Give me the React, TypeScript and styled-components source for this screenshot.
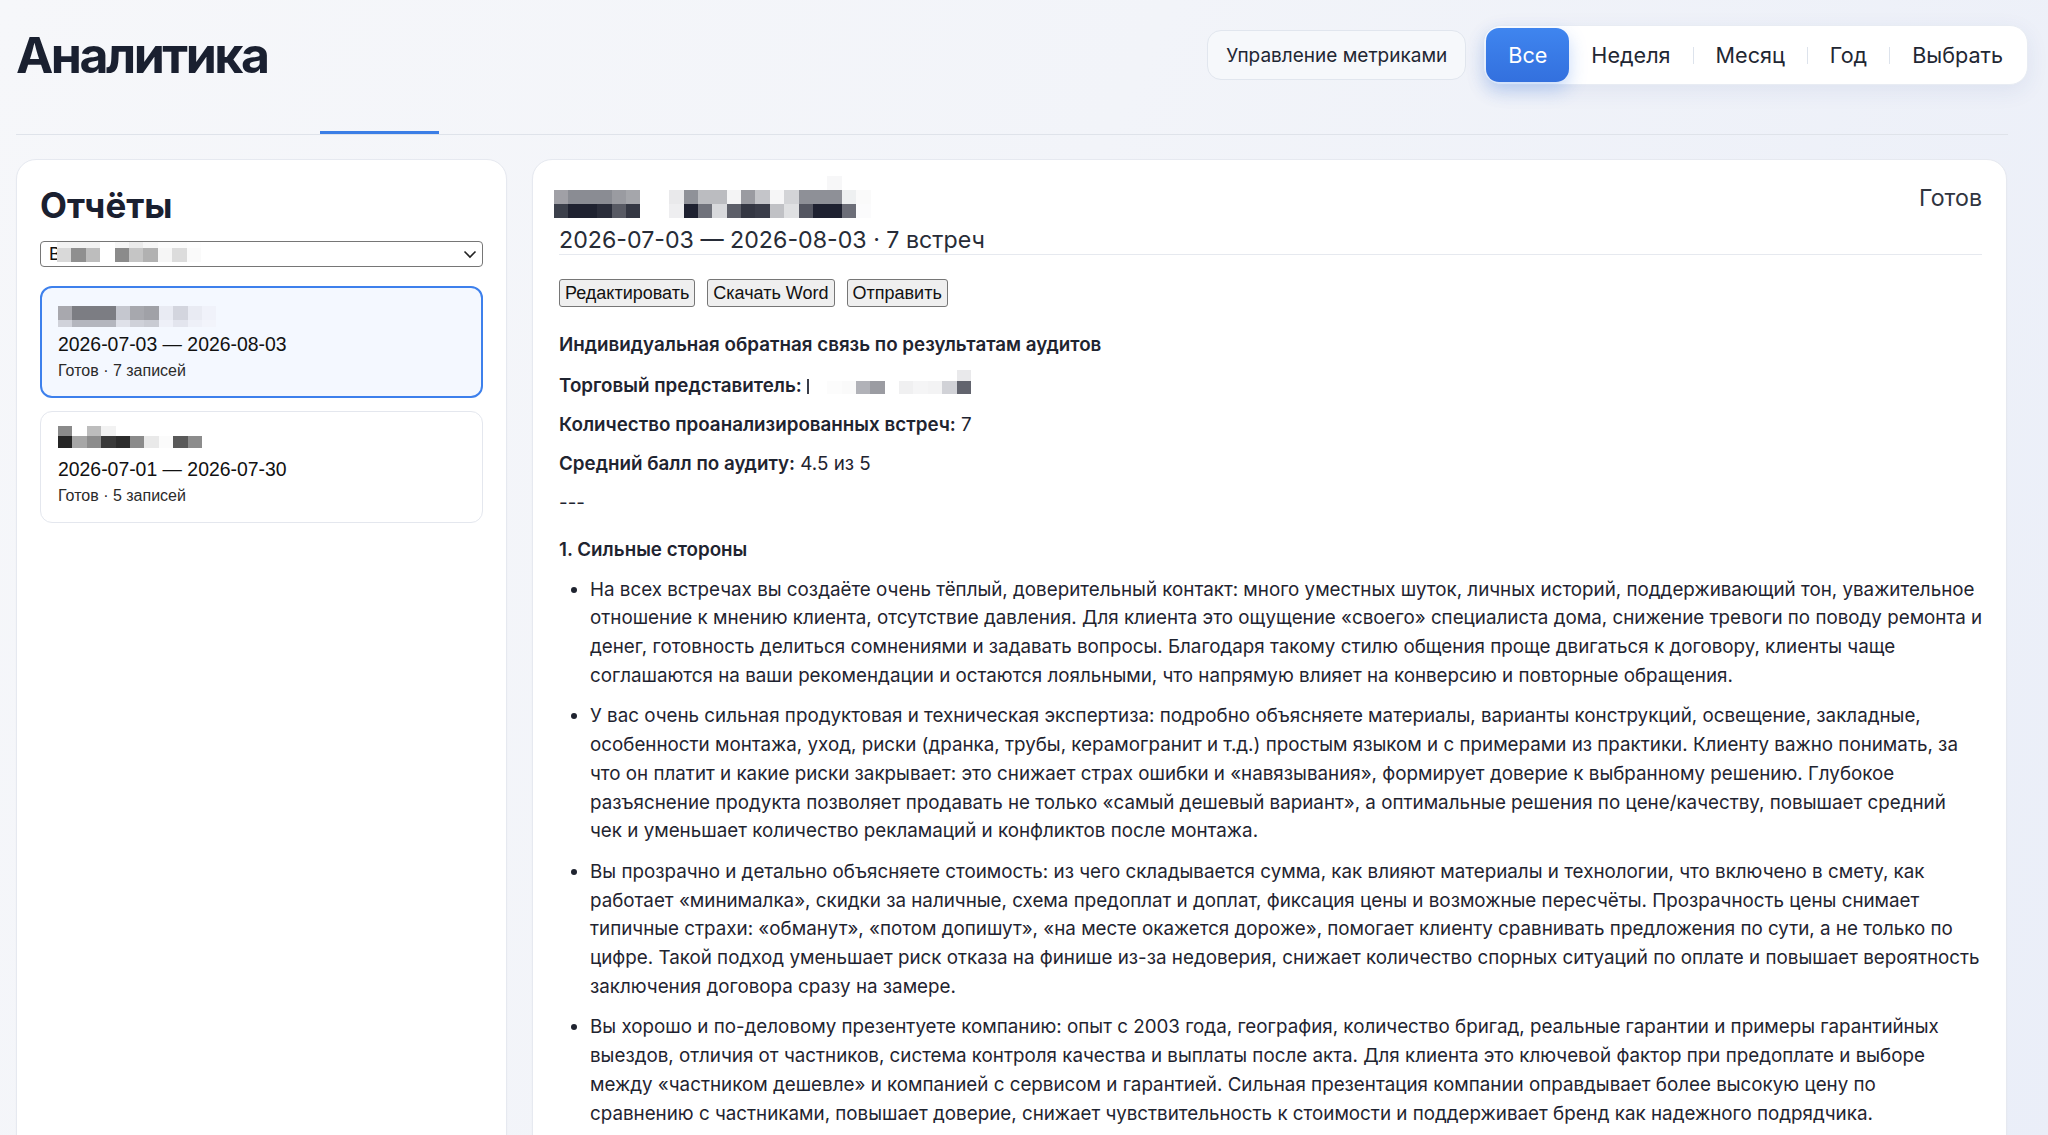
import React from 'react'
import styled, { createGlobalStyle } from 'styled-components'

const GlobalStyle = createGlobalStyle`
    html, body {
        margin: 0;
        padding: 0;
    }

    body {
        font-family: Inter, "Noto Sans", sans-serif;
        color: #1f2430;
        background: linear-gradient(115deg, #f6f7fa 0%, #f2f4f9 45%, #eaeef8 100%);
        min-height: 100vh;
    }
`

const Page = styled.div`
    padding: 24px 0 0 16px;
`

const Header = styled.header`
    display: flex;
    align-items: center;
    justify-content: space-between;
    padding-right: 20px;
`

const Title = styled.h1`
    margin: 0;
    font-size: 50px;
    line-height: 62px;
    font-weight: 700;
    letter-spacing: -2.5px;
    color: #1a2030;
`

const Controls = styled.div`
    display: flex;
    align-items: center;
    gap: 17px;
`

const GhostButton = styled.button`
    height: 50px;
    padding: 0 18px;
    border: 1px solid #e1e6ee;
    border-radius: 14px;
    background: #f6f8fb;
    font-family: Inter, sans-serif;
    font-size: 19px;
    color: #1f2733;
`

const Segmented = styled.div`
    display: flex;
    align-items: center;
    padding: 2px;
    border: 1px solid #e8ecf3;
    border-radius: 18px;
    background: #fff;
    box-shadow: 0 6px 22px rgba(40, 70, 140, 0.08);
`

const Segment = styled.button<{ $active?: boolean }>`
    height: 54px;
    padding: 0 22px;
    border: 0;
    border-radius: 13px;
    font-family: Inter, sans-serif;
    font-size: 21.6px;
    color: ${p => (p.$active ? '#fff' : '#1f2733')};
    background: ${p => (p.$active ? 'linear-gradient(180deg, #3f85ef 0%, #3370de 100%)' : 'transparent')};
    box-shadow: ${p => (p.$active ? '0 8px 18px rgba(52, 118, 230, 0.28)' : 'none')};
`

const SegmentDivider = styled.span`
    width: 1px;
    height: 17px;
    background: #dde3ec;
`

const TabBar = styled.nav`
    display: flex;
    margin-right: 40px;
    border-bottom: 1px solid #dfe3ea;
`

const Tab = styled.div<{ $width: number; $active?: boolean }>`
    position: relative;
    width: ${p => p.$width}px;
    height: 48px;

    &::after {
        content: "";
        display: ${p => (p.$active ? 'block' : 'none')};
        position: absolute;
        left: 0;
        right: 0;
        bottom: 0;
        height: 3px;
        background: #3b7ee6;
    }
`

const Layout = styled.main`
    display: grid;
    grid-template-columns: 491px 1fr;
    gap: 25px;
    margin-top: 24px;
    padding-right: 41px;
    align-items: stretch;
`

const Panel = styled.section`
    background: #fff;
    border: 1px solid #e6e9f0;
    border-radius: 20px;
    box-shadow: 0 1px 2px rgba(20, 30, 60, 0.03);
`

const Sidebar = styled(Panel)`
    padding: 24px 23px;
`

const SidebarTitle = styled.h2`
    margin: 0;
    font-size: 35px;
    line-height: 42px;
    font-weight: 700;
    color: #1a2030;
`

const SelectBox = styled.div`
    display: flex;
    align-items: center;
    height: 24px;
    margin-top: 15px;
    padding: 0 5px 0 8px;
    border: 1px solid #767676;
    border-radius: 4px;
    font-family: "Liberation Sans", Arial, sans-serif;
    font-size: 18px;
    line-height: 24px;
    color: #111;
`

const SelectText = styled.span`
    flex: none;
`

const Chevron = styled.svg`
    margin-left: auto;
    width: 14px;
    height: 9px;
`

const ReportList = styled.div`
    display: flex;
    flex-direction: column;
    gap: 13px;
    margin-top: 19px;
`

const ReportCard = styled.div<{ $active?: boolean }>`
    border: ${p => (p.$active ? '2px solid #3d80ec' : '1px solid #e4e7ee')};
    padding: ${p => (p.$active ? '13px 16px 15px' : '14px 17px 16px')};
    border-radius: 12px;
    background: ${p => (p.$active ? '#f4f8ff' : '#fff')};
    font-family: "Liberation Sans", Arial, sans-serif;
`

const CardDates = styled.div`
    margin-top: 4px;
    font-size: 19.4px;
    line-height: 24px;
    color: #111;
`

const CardMeta = styled.div`
    margin-top: 5px;
    font-size: 16px;
    line-height: 20px;
    color: #2a2a2a;
`

const MosaicBox = styled.div<{ $inline?: boolean; $shift?: number }>`
    display: ${p => (p.$inline ? 'inline-block' : 'block')};
    flex: none;
    overflow: hidden;
    vertical-align: ${p => (p.$inline ? '-2px' : 'baseline')};
    margin-left: ${p => p.$shift ?? 0}px;
`

const MosaicRow = styled.div<{ $h: number }>`
    display: flex;
    height: ${p => p.$h}px;
`

const MosaicCell = styled.div<{ $w: number; $c: string }>`
    flex: none;
    width: ${p => p.$w}px;
    background: ${p => p.$c || 'transparent'};
`

const Report = styled(Panel)`
    padding: 16px 22.5px 40px 26px;
    min-width: 0;
`

const ReportHead = styled.div`
    display: flex;
    justify-content: space-between;
    align-items: flex-start;
    margin-right: 1.5px;
    border-bottom: 1px solid #e6e9ef;
`

const ReportPeriod = styled.div`
    margin-top: 8px;
    font-size: 23.2px;
    line-height: 28px;
    color: #272c37;
`

const Status = styled.div`
    margin-top: 8px;
    font-size: 23.2px;
    line-height: 28px;
    color: #30353f;
`

const Actions = styled.div`
    display: flex;
    gap: 12px;
    margin-top: 24px;
`

const NativeButton = styled.button`
    height: 28px;
    padding: 0 5px;
    border: 1px solid #767676;
    border-radius: 3px;
    background: #efefef;
    font-family: "Liberation Sans", Arial, sans-serif;
    font-size: 18px;
    color: #111;
`

const Content = styled.article`
    margin-top: 24px;
    font-size: 18.8px;
    line-height: 28.8px;
    color: #1f2430;

    p {
        margin: 0 0 10.2px;
    }

    strong {
        font-weight: 600;
    }

    h3 {
        margin: 18px 0 0;
        font-size: 18.8px;
        line-height: 28.8px;
        font-weight: 600;
    }

    ul {
        margin: 11px 0 0;
        padding-left: 31px;
    }

    li {
        margin-bottom: 11.5px;
    }
`

// a cell is either a colour (standard width) or a colour with its own width
type Cell = string | { c: string; w: number }
type Row = { h: number; c: Cell[] }

function Mosaic({ rows, cell = 14.4, inline, shift }: { rows: Row[]; cell?: number; inline?: boolean; shift?: number }) {
    return (
        <MosaicBox $inline={inline} $shift={shift}>
            {rows.map((row, i) => (
                <MosaicRow key={i} $h={row.h}>
                    {row.c.map((c, j) =>
                        typeof c === 'string'
                            ? <MosaicCell key={j} $w={cell} $c={c} />
                            : <MosaicCell key={j} $w={c.w} $c={c.c} />
                    )}
                </MosaicRow>
            ))}
        </MosaicBox>
    )
}

const selectName: Row[] = [
    { h: 6, c: ['#f3f3f3', '#f3f3f3', '#f3f3f3', '', '#f6f6f6', '#ebebeb', '#f6f6f6', '#fbfbfb', '#fbfbfb', '#fdfdfd'] },
    { h: 14, c: ['#d9d9d9', '#8f8f8f', '#bdbdbd', '', '#8b8b8b', '#c5c5c5', '#b1b1b1', '#f6f6f6', '#dcdcdc', '#fafafa'] },
    { h: 4, c: [] },
]

const firstCardName: Row[] = [
    { h: 5, c: [] },
    { h: 14, c: ['#a8a8ae', '#7c7d83', '#7c7d83', '#7c7d83', '#c5c7cf', '#a7a8ae', '#a0a1a7', '#e9ebf3', '#d3d5de', '#e9ebf3', '#f0f2fa'] },
    { h: 7, c: ['#d0d2da', '#b4b6be', '#b4b6be', '#b4b6be', '#dfe1e9', '#cfd1d9', '#c9cbd3', '#eef0f8', '#e3e5ee', '#eef0f8', '#f2f4fb'] },
    { h: 1, c: [] },
]

const secondCardName: Row[] = [
    { h: 10, c: ['#8a8a8a', '', '#bdbdbd', '#f2f2f2'] },
    { h: 12, c: ['#252525', '#a6a6a6', '#8c8c8c', '#393939', '#2c2c2c', '#8a8a8a', '#e9e9e9', '#fbfbfb', '#595959', '#8c8c8c'] },
    { h: 5, c: [] },
]

const reportName: Row[] = [
    { h: 14, c: ['', '', '', '', '', '', '', '', '', '', '', '', '', '', '', '', '', '', '', '#f7f7f8', ''] },
    {
        h: 14,
        c: ['#a0a0a6', '#8a8c93', '#8a8c93', '#8a8c93', '#9a9ba1', '#a5a6ab', '', '',
            '#e9e9eb', '#8f9198', '#bbbcc0', '#bbbcc0', '#f4f4f5', '#9a9ba1', '#c4c5c9', '#f6f6f7', '#d3d4d7', '#8e9097', '#8e9097', '#8e9097', '#eef0f1', '#fafafa'],
    },
    {
        h: 14,
        c: ['#3c404b', '#1f2230', '#1f2230', '#2a2d3a', '#585a64', '#343743', '', '',
            '#eeeef0', '#1e2130', '#70727b', '#d8d9dc', '#5d5f69', '#343743', '#3a3d49', '#c0c1c5', '#dfe0e2', '#545661', '#1e2130', '#1e2130', '#6c6e78', '#fbfbfc'],
    },
]

// the leading 2px stroke is the first letter peeking out from under the blur
const repName: Row[] = [
    { h: 9, c: [{ c: '', w: 20 }, '', '', '', '', '', '', '', '', '', '#e9e9eb'] },
    { h: 2, c: [{ c: '#3a3d48', w: 2 }, { c: '', w: 18 }, '', '', '', '', '', '', '', '', '', '#e9e9eb'] },
    { h: 13, c: [{ c: '#3a3d48', w: 2 }, { c: '', w: 18 }, '#fcfcfc', '#fafafa', '#b1b2b8', '#9b9ca2', '', '#f0f0f1', '#f5f5f6', '#f3f3f4', '#d1d2d7', '#62646e'] },
]

const strengths = [
    'На всех встречах вы создаёте очень тёплый, доверительный контакт: много уместных шуток, личных историй, поддерживающий тон, уважительное отношение к мнению клиента, отсутствие давления. Для клиента это ощущение «своего» специалиста дома, снижение тревоги по поводу ремонта и денег, готовность делиться сомнениями и задавать вопросы. Благодаря такому стилю общения проще двигаться к договору, клиенты чаще соглашаются на ваши рекомендации и остаются лояльными, что напрямую влияет на конверсию и повторные обращения.',
    'У вас очень сильная продуктовая и техническая экспертиза: подробно объясняете материалы, варианты конструкций, освещение, закладные, особенности монтажа, уход, риски (дранка, трубы, керамогранит и т.д.) простым языком и с примерами из практики. Клиенту важно понимать, за что он платит и какие риски закрывает: это снижает страх ошибки и «навязывания», формирует доверие к выбранному решению. Глубокое разъяснение продукта позволяет продавать не только «самый дешевый вариант», а оптимальные решения по цене/качеству, повышает средний чек\u00a0и уменьшает количество рекламаций и конфликтов после монтажа.',
    'Вы прозрачно и детально объясняете стоимость: из чего складывается сумма, как влияют материалы и технологии, что включено в смету, как работает «минималка», скидки за наличные, схема предоплат и доплат, фиксация цены и возможные пересчёты. Прозрачность цены снимает типичные страхи: «обманут», «потом допишут», «на месте окажется дороже», помогает клиенту сравнивать предложения по сути, а не только по цифре. Такой подход уменьшает риск отказа на финише из-за недоверия, снижает количество спорных ситуаций по оплате и повышает вероятность заключения договора сразу на замере.',
    'Вы хорошо и по-деловому презентуете компанию: опыт с 2003 года, география, количество бригад, реальные гарантии и примеры гарантийных выездов, отличия от частников, система контроля качества и выплаты после акта. Для клиента это ключевой фактор при предоплате и выборе между «частником дешевле» и компанией с сервисом и гарантией. Сильная презентация компании оправдывает более высокую цену по сравнению с частниками, повышает доверие, снижает чувствительность к стоимости и поддерживает бренд как надежного подрядчика.',
]

const periods = ['Неделя', 'Месяц', 'Год', 'Выбрать']

export default function App() {
    return (
        <>
            <GlobalStyle />
            <Page>
                <Header>
                    <Title>Аналитика</Title>
                    <Controls>
                        <GhostButton>Управление метриками</GhostButton>
                        <Segmented>
                            <Segment $active>Все</Segment>
                            {periods.map((label, i) => (
                                <React.Fragment key={label}>
                                    {i > 0 && <SegmentDivider />}
                                    <Segment>{label}</Segment>
                                </React.Fragment>
                            ))}
                        </Segmented>
                    </Controls>
                </Header>

                <TabBar>
                    <Tab $width={304} />
                    <Tab $width={119} $active />
                </TabBar>

                <Layout>
                    <Sidebar>
                        <SidebarTitle>Отчёты</SidebarTitle>
                        <SelectBox>
                            <SelectText>В</SelectText>
                            <Mosaic rows={selectName} shift={-4} />
                            <Chevron viewBox="0 0 14 9">
                                <path d="M1.5 1.5 L7 7 L12.5 1.5" fill="none" stroke="#222" strokeWidth="1.6" />
                            </Chevron>
                        </SelectBox>

                        <ReportList>
                            <ReportCard $active>
                                <Mosaic rows={firstCardName} />
                                <CardDates>2026-07-03 — 2026-08-03</CardDates>
                                <CardMeta>Готов · 7 записей</CardMeta>
                            </ReportCard>
                            <ReportCard>
                                <Mosaic rows={secondCardName} />
                                <CardDates>2026-07-01 — 2026-07-30</CardDates>
                                <CardMeta>Готов · 5 записей</CardMeta>
                            </ReportCard>
                        </ReportList>
                    </Sidebar>

                    <Report>
                        <ReportHead>
                            <div>
                                <Mosaic rows={reportName} shift={-5} />
                                <ReportPeriod>2026-07-03 — 2026-08-03 · 7 встреч</ReportPeriod>
                            </div>
                            <Status>Готов</Status>
                        </ReportHead>

                        <Actions>
                            <NativeButton>Редактировать</NativeButton>
                            <NativeButton>Скачать Word</NativeButton>
                            <NativeButton>Отправить</NativeButton>
                        </Actions>

                        <Content>
                            <p><strong>Индивидуальная обратная связь по результатам аудитов</strong></p>
                            <p>
                                <strong>Торговый представитель:</strong> <Mosaic rows={repName} inline />
                            </p>
                            <p><strong>Количество проанализированных встреч:</strong> 7</p>
                            <p><strong>Средний балл по аудиту:</strong> 4.5 из 5</p>
                            <p>---</p>
                            <h3>1. Сильные стороны</h3>
                            <ul>
                                {strengths.map(text => (
                                    <li key={text.slice(0, 24)}>{text}</li>
                                ))}
                            </ul>
                        </Content>
                    </Report>
                </Layout>
            </Page>
        </>
    )
}
